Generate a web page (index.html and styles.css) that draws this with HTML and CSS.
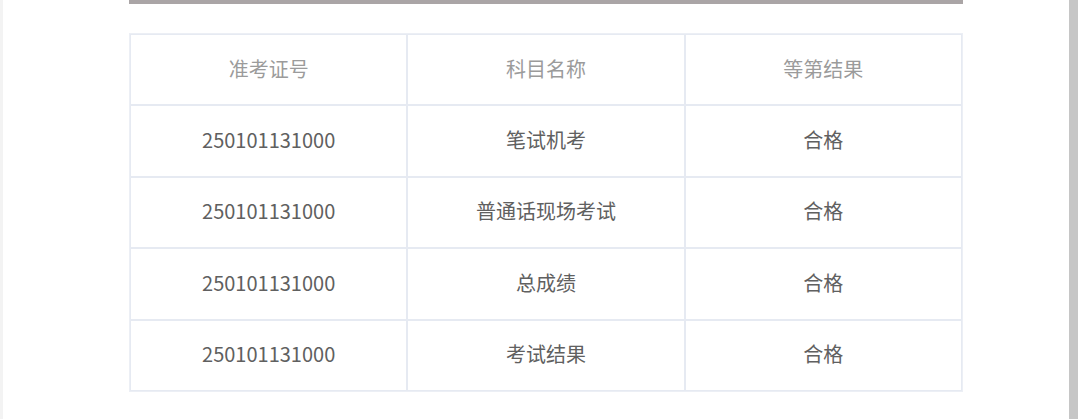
FILE: index.html
```html
<!DOCTYPE html>
<html lang="zh-CN">
<head>
<meta charset="utf-8">
<title>成绩查询</title>
<link rel="stylesheet" href="styles.css">
</head>
<body>
<div class="page">
  <div class="edge-left"></div>
  <main class="main">
    <div class="topbar"></div>
    <table class="score">
      <thead>
        <tr><th>准考证号</th><th>科目名称</th><th>等第结果</th></tr>
      </thead>
      <tbody>
        <tr><td>250101131000</td><td>笔试机考</td><td>合格</td></tr>
        <tr><td>250101131000</td><td>普通话现场考试</td><td>合格</td></tr>
        <tr><td>250101131000</td><td>总成绩</td><td>合格</td></tr>
        <tr><td>250101131000</td><td>考试结果</td><td>合格</td></tr>
      </tbody>
    </table>
  </main>
  <div class="edge-right"></div>
</div>
</body>
</html>
```
FILE: styles.css
```css
html, body {
  margin: 0;
  padding: 0;
  background: #ffffff;
}
.page {
  display: flex;
  width: 1078px;
  height: 419px;
  overflow: hidden;
}
.edge-left {
  width: 3px;
  background: #f3f3f3;
}
.edge-right {
  width: 9px;
  background: #c6c6c6;
}
.main {
  flex: 1;
  padding-left: 126px;
  font-family: "Noto Sans CJK SC", "Noto Sans", sans-serif;
}
.topbar {
  width: 834px;
  height: 4px;
  background: #aaa5a6;
}
.score {
  margin-top: 29px;
  width: 834px;
  border-collapse: separate;
  border-spacing: 0;
  border: 1px solid #eceff5;
  table-layout: fixed;
}
.score th,
.score td {
  height: 71.4px;
  box-sizing: border-box;
  border: 1px solid #e6eaf2;
  text-align: center;
  vertical-align: middle;
  font-size: 20px;
  font-weight: 400;
  padding: 0 0 3px;
}
.score th {
  color: #9b9b9b;
}
.score td {
  color: #606060;
}
```
